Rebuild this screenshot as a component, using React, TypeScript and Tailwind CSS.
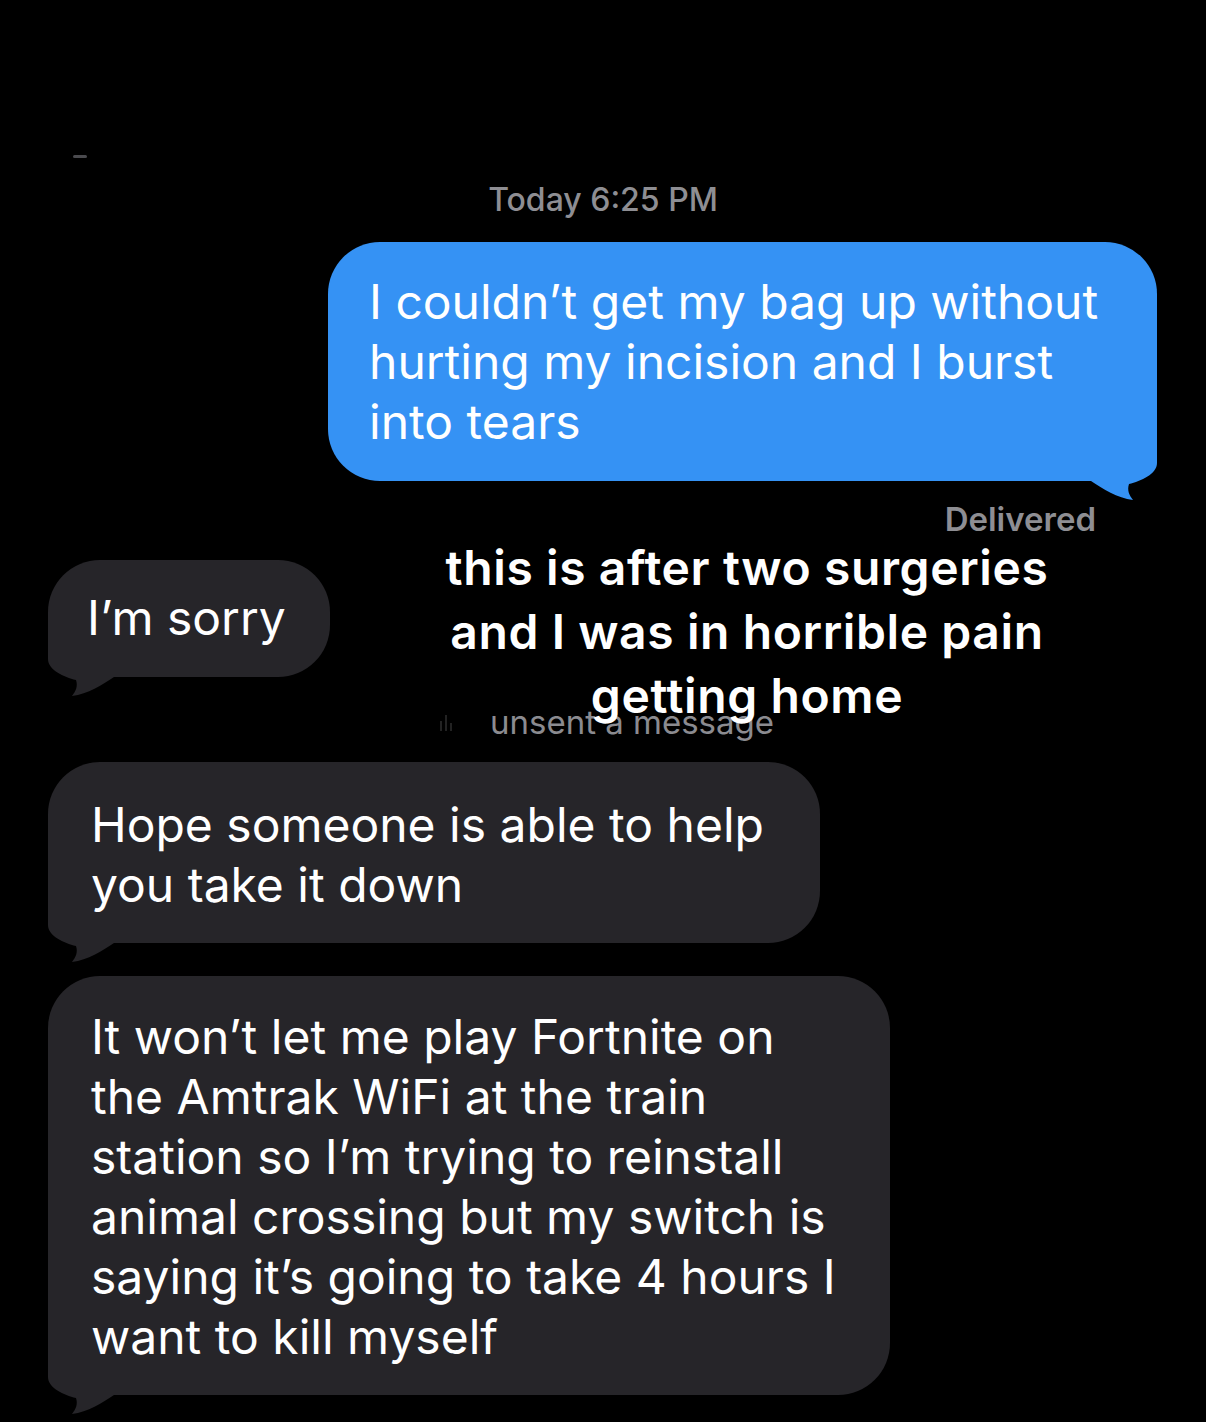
import React from 'react';

const font = { fontFamily: 'Inter, "Liberation Sans", sans-serif' };

function Tail({ side, color }: { side: 'left' | 'right'; color: string }) {
  return (
    <svg
      viewBox="0 0 70 80"
      className={
        side === 'left'
          ? 'absolute left-0 bottom-[-20px] w-[70px] h-[80px]'
          : 'absolute right-0 bottom-[-20px] w-[70px] h-[80px] -scale-x-100'
      }
    >
      <path
        d="M0 0 L0 42 C0 53 16 60 28 63 C30 69 28 74 24 79 C40 77 54 68 66 60 L66 0 Z"
        fill={color}
      />
    </svg>
  );
}

function Bubble({
  lines,
  className,
  side,
}: {
  lines: string[];
  className: string;
  side: 'left' | 'right';
}) {
  const color = side === 'left' ? '#262529' : '#3592f4';
  return (
    <div className={`relative rounded-[52px] text-white text-[48px] leading-[60px] ${className}`}>
      <Tail side={side} color={color} />
      <div className="relative">
        {lines.map((l) => (
          <div key={l} className="whitespace-nowrap">
            {l}
          </div>
        ))}
      </div>
    </div>
  );
}

export default function App() {
  return (
    <div className="relative min-h-screen bg-black overflow-hidden" style={font}>
      {/* stray mark top-left */}
      <div className="absolute left-[73px] top-[155px] w-[14px] h-[3px] rounded-full bg-[#4a4a4e]" />

      <div className="flex flex-col pt-[182px] pb-[40px]">
        <div className="text-center text-[32px] leading-[36px] font-medium text-[#8e8e93]">
          Today 6:25 PM
        </div>

        <div className="flex justify-end pr-[49px] mt-[24px]">
          <Bubble
            side="right"
            className="w-[829px] bg-[#3592f4] pl-[41px] pt-[30px] pb-[29px]"
            lines={[
              'I couldn\u2019t get my bag up without',
              'hurting my incision and I burst',
              'into tears',
            ]}
          />
        </div>

        <div className="text-right pr-[110px] mt-[22px] text-[33px] leading-[32px] font-semibold text-[#8e8e93]">
          Delivered
        </div>

        <div className="flex pl-[48px] mt-[25px]">
          <Bubble
            side="left"
            className="w-[282px] bg-[#262529] pl-[39px] pt-[28px] pb-[29px]"
            lines={['I\u2019m sorry']}
          />
        </div>

        <div className="flex items-center pl-[440px] mt-[29px] h-[32px]">
          <div className="w-[20px] h-[18px] flex items-end gap-[3px] opacity-40">
            <div className="w-[2px] h-[10px] bg-[#555]" />
            <div className="w-[2px] h-[16px] bg-[#555]" />
            <div className="w-[2px] h-[8px] bg-[#555]" />
          </div>
          <div className="ml-[30px] text-[33px] leading-[32px] text-[#8b8b90]">unsent a message</div>
        </div>

        <div className="flex pl-[48px] mt-[24px]">
          <Bubble
            side="left"
            className="w-[772px] bg-[#262529] pl-[43px] pt-[33px] pb-[28px]"
            lines={['Hope someone is able to help', 'you take it down']}
          />
        </div>

        <div className="flex pl-[48px] mt-[33px]">
          <Bubble
            side="left"
            className="w-[842px] bg-[#262529] pl-[43px] pt-[31px] pb-[28px]"
            lines={[
              'It won\u2019t let me play Fortnite on',
              'the Amtrak WiFi at the train',
              'station so I\u2019m trying to reinstall',
              'animal crossing but my switch is',
              'saying it\u2019s going to take 4 hours I',
              'want to kill myself',
            ]}
          />
        </div>
      </div>

      {/* caption overlay */}
      <div className="absolute top-[536px] left-[397px] w-[700px] text-center text-white text-[48px] leading-[64px] font-semibold tracking-[0.6px]">
        <div>this is after two surgeries</div>
        <div>and I was in horrible pain</div>
        <div>getting home</div>
      </div>
    </div>
  );
}
